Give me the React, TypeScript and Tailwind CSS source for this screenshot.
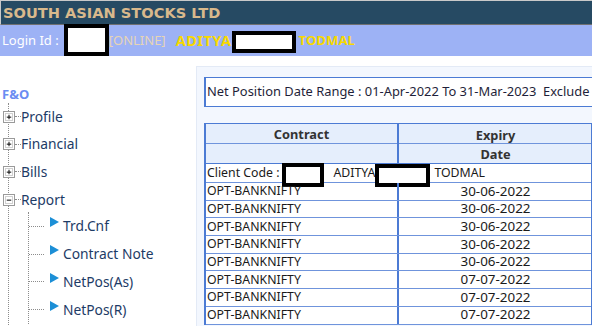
import React from "react";

const sideItems = ["Profile", "Financial", "Bills"];
const reportItems = ["Trd.Cnf", "Contract Note", "NetPos(As)", "NetPos(R)"];
const rows = [
  "30-06-2022",
  "30-06-2022",
  "30-06-2022",
  "30-06-2022",
  "30-06-2022",
  "07-07-2022",
  "07-07-2022",
  "07-07-2022",
];

const Redact: React.FC<{ className: string }> = ({ className }) => (
  <span className={`inline-block shrink-0 bg-white border-[4px] border-black ${className}`} />
);

const TreeBox: React.FC<{ open?: boolean }> = ({ open }) => (
  <span className="-ml-[6px] w-[12px] h-[12px] shrink-0 flex items-center justify-center border border-[#9a9a9a] bg-white">
    <span className="w-[8px] h-[8px] border border-[#d0d0d0] flex items-center justify-center">
      <svg width="8" height="8" viewBox="0 0 8 8">
        <rect x="1" y="3.5" width="6" height="1.4" fill="#111" />
        {!open && <rect x="3.3" y="1" width="1.4" height="6" fill="#111" />}
      </svg>
    </span>
  </span>
);

export default function App() {
  return (
    <div className="w-[592px] h-[326px] overflow-hidden bg-white font-['Noto_Sans',sans-serif]">
      {/* title bar */}
      <div className="h-[25px] bg-[#264a63] border-t border-l border-t-[#c9c9c9] border-l-[#c9c9c9] border-b border-b-[#707070] flex items-center pl-[2px]">
        <span className="font-['DejaVu_Sans',sans-serif] font-bold text-[14.6px] text-[#d9b98c]">
          SOUTH ASIAN STOCKS LTD
        </span>
      </div>

      {/* login bar */}
      <div className="h-[31px] bg-[#9db2f5] flex items-center pl-[2px] text-[13px] whitespace-nowrap">
        <span className="text-white">Login Id :</span>
        <Redact className="ml-[5px] w-[45px] h-[32px] -mt-[2px]" />
        <span className="text-[#e6d4b4]">[ONLINE]</span>
        <span className="ml-[10px] font-bold text-[14.5px] tracking-[0.5px] text-[#f7d900]">ADITYA</span>
        <Redact className="w-[64px] h-[22px] mt-[3px]" />
        <span className="ml-[3px] font-bold text-[13.2px] text-[#f7d900]">TODMAL</span>
      </div>

      <div className="flex">
        {/* sidebar tree */}
        <div className="w-[196px] shrink-0 pt-[30px] text-[13.8px] text-[#1d3b66]">
          <div className="h-[17px] pl-[2px] flex items-center font-bold text-[13px] text-[#6a8cf2] leading-none">F&amp;O</div>
          <div className="ml-[8px] border-l border-dotted border-[#8c8c8c] h-[240px]">
            {[...sideItems, "Report"].map((t) => (
              <div key={t} className="h-[27.6px] flex items-center">
                <TreeBox open={t === "Report"} />
                <span className="w-[6px] border-t border-dotted border-[#8c8c8c]" />
                <span className="leading-none">{t}</span>
              </div>
            ))}
            <div className="ml-[19px] -mt-[1px] border-l border-dotted border-[#8c8c8c]">
              {reportItems.map((t) => (
                <div key={t} className="h-[27.8px] flex items-center">
                  <span className="w-[15px] border-t border-dotted border-[#8c8c8c]" />
                  <svg width="9" height="10" viewBox="0 0 9 10" className="ml-[6px] -mt-[8px] shrink-0">
                    <path d="M0 0 L9 5 L0 10 Z" fill="#1c8fd6" />
                  </svg>
                  <span className="ml-[4px] leading-none">{t}</span>
                </div>
              ))}
            </div>
          </div>
        </div>

        {/* content frame */}
        <div className="flex-1 mt-[10px] bg-[#f3f7fe] border-l border-t border-[#e3eaf6] pl-[7px] h-[270px]">
          <div className="mt-[10px] w-[420px] h-[30px] bg-white border border-[#4c7bd4] border-l-2 flex items-center pl-[1px] whitespace-nowrap text-[12.9px] text-[#1f1f3a]">
            Net Position Date Range : 01-Apr-2022 To 31-Mar-2023&nbsp;&nbsp;Exclude
          </div>

          <div className="mt-[16px] w-[388px] border-t border-l-2 border-r border-[#4c7bd4] text-[12.3px] text-[#1a1a1a]">
            <div className="grid grid-cols-[193px_193px] h-[20px] bg-[#e5eefc] border-b border-[#6f94dc] font-bold text-[12.8px] text-[#333] pt-[2px]">
              <div className="border-r-2 border-[#4c7bd4] -mt-[2px] flex items-center justify-center">Contract</div>
              <div className="flex items-center justify-center">Expiry</div>
            </div>
            <div className="grid grid-cols-[193px_193px] h-[20px] bg-[#e5eefc] border-b border-[#4c7bd4] font-bold text-[12.8px] text-[#333]">
              <div className="border-r-2 border-[#4c7bd4]" />
              <div className="flex items-center justify-center pt-[1px]">Date</div>
            </div>
            <div className="h-[19px] bg-white border-b border-[#6f94dc] flex items-center pl-[1px] whitespace-nowrap">
              <span>Client Code :</span>
              <Redact className="ml-[2px] w-[42px] h-[24px] -mb-[4px]" />
              <span className="ml-[10px]">ADITYA</span>
              <Redact className="w-[55px] h-[23px] -mb-[4px]" />
              <span className="ml-[4px]">TODMAL</span>
            </div>
            {rows.map((d, i) => (
              <div key={i} className="grid grid-cols-[193px_193px] h-[17.7px] bg-white border-b border-[#6f94dc]">
                <div className="border-r-2 border-[#4c7bd4] flex items-center pl-[1px] leading-none">OPT-BANKNIFTY</div>
                <div className="flex items-center justify-center leading-none text-[13.4px]">{d}</div>
              </div>
            ))}
          </div>
        </div>
      </div>
    </div>
  );
}
